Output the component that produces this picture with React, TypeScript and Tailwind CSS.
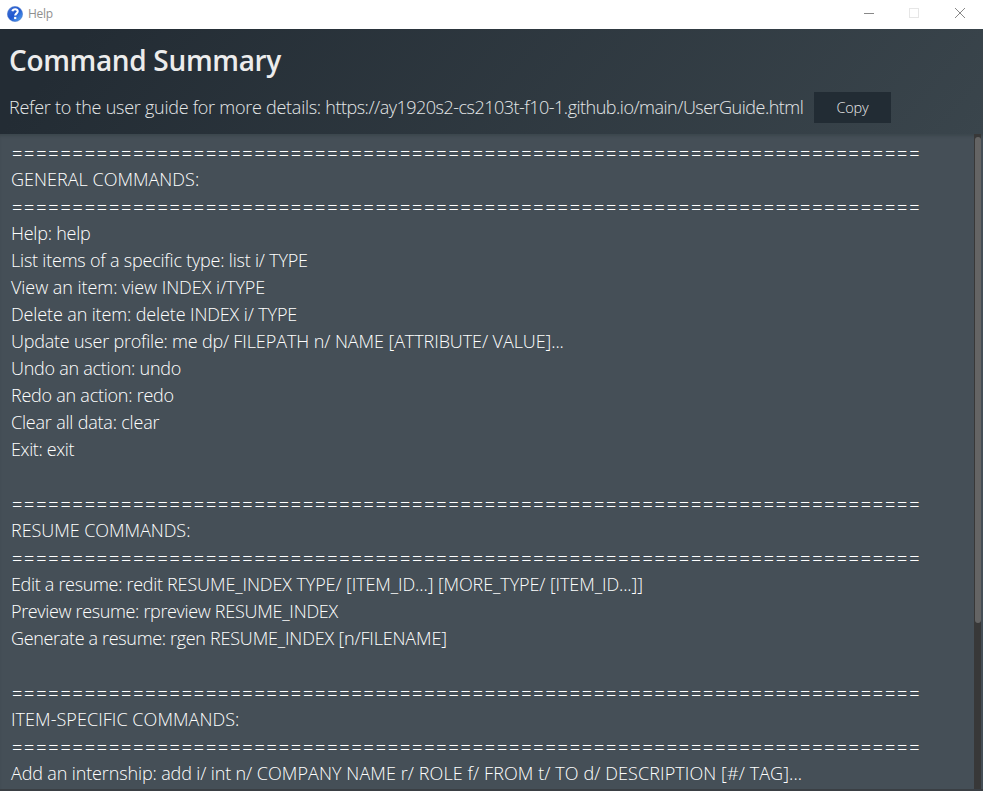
type Segment = { text: string; tracking: string };
type Line = Segment[];

const rule: Line = [
  { text: "=".repeat(75), tracking: "relative left-px top-px tracking-[1.85px]" },
];
const blank: Line = [{ text: "\u00a0", tracking: "" }];

const lines: Line[] = [
  rule,
  [{ text: "GENERAL COMMANDS:", tracking: "tracking-[0.02px]" }],
  rule,
  [{ text: "Help: help", tracking: "tracking-[-0.23px]" }],
  [{ text: "List items of a specific type: list i/ TYPE", tracking: "tracking-[-0.21px]" }],
  [{ text: "View an item: view INDEX i/TYPE", tracking: "tracking-[-0.05px]" }],
  [{ text: "Delete an item: delete INDEX i/ TYPE", tracking: "tracking-[-0.13px]" }],
  [
    { text: "Update user profile: me dp/ ", tracking: "tracking-[-0.22px]" },
    { text: "FILEPATH n/ NAME [ATTRIBUTE/ VALUE]...", tracking: "tracking-[-0.08px]" },
  ],
  [{ text: "Undo an action: undo", tracking: "tracking-[-0.26px]" }],
  [{ text: "Redo an action: redo", tracking: "tracking-[-0.25px]" }],
  [{ text: "Clear all data: clear", tracking: "tracking-[-0.2px]" }],
  [{ text: "Exit: exit", tracking: "tracking-[-0.38px]" }],
  blank,
  rule,
  [{ text: "RESUME COMMANDS:", tracking: "tracking-[-0.05px]" }],
  rule,
  [
    { text: "Edit a resume: redit ", tracking: "tracking-[-0.32px]" },
    {
      text: "RESUME_INDEX TYPE/ [ITEM_ID...] [MORE_TYPE/ [ITEM_ID...]]",
      tracking: "tracking-[-0.1px]",
    },
  ],
  [
    { text: "Preview resume: rpreview ", tracking: "tracking-[-0.35px]" },
    { text: "RESUME_INDEX", tracking: "tracking-[-0.24px]" },
  ],
  [
    { text: "Generate a resume: rgen ", tracking: "tracking-[-0.335px]" },
    { text: "RESUME_INDEX [n/FILENAME]", tracking: "tracking-[-0.17px]" },
  ],
  blank,
  rule,
  [{ text: "ITEM-SPECIFIC COMMANDS:", tracking: "tracking-[0.05px]" }],
  rule,
  [
    { text: "Add an internship: add i/ int n/ ", tracking: "tracking-[-0.135px]" },
    {
      text: "COMPANY NAME r/ ROLE f/ FROM t/ TO d/ DESCRIPTION [#/ TAG]...",
      tracking: "tracking-[0.09px]",
    },
  ],
];

function HelpIcon() {
  return (
    <svg width="16" height="16" viewBox="0 0 16 16">
      <defs>
        <linearGradient id="ball" x1="0" y1="0" x2="1" y2="1">
          <stop offset="0" stopColor="#4676d6" />
          <stop offset="0.5" stopColor="#1f56cf" />
          <stop offset="1" stopColor="#5fb0f5" />
        </linearGradient>
      </defs>
      <circle cx="8" cy="8" r="7.6" fill="url(#ball)" stroke="#3c6cc4" strokeWidth="0.5" />
      <path
        d="M5.4 5.2C6 2.7 10.9 2.6 10.7 5.5C10.6 7.4 8.2 7.3 8.2 9.6"
        fill="none"
        stroke="#fff"
        strokeWidth="2.1"
      />
      <rect x="7.1" y="10.9" width="2.2" height="2.2" fill="#fff" />
    </svg>
  );
}

function TitleBar() {
  return (
    <header className="flex h-[29px] shrink-0 items-start bg-white">
      <div className="flex h-[27px] items-center gap-[5px] pl-[7px]">
        <HelpIcon />
        <span className="text-[12px] leading-[27px] tracking-[-0.25px] text-[#8f8f8f]">Help</span>
      </div>
      <div className="ml-auto flex h-[27px] items-center pr-[17px]">
        <svg width="103" height="12" viewBox="0 0 103 12" fill="none" shapeRendering="crispEdges">
          <path d="M1 5.5H11" stroke="#888" />
          <rect x="46.5" y="0.5" width="9" height="9" stroke="#e6e6e6" />
          <path d="M92 0L102 10M102 0L92 10" stroke="#888" shapeRendering="auto" />
        </svg>
      </div>
    </header>
  );
}

export default function App() {
  return (
    <div className="flex h-[791px] w-[983px] flex-col overflow-hidden bg-[#3c474e] font-['Open_Sans','Noto_Sans',sans-serif]">
      <TitleBar />
      <section className="flex h-[105px] shrink-0 flex-col bg-[linear-gradient(130deg,#232c34_8%,#3a454c)] pl-[9px]">
        <h1 className="mt-2 h-[47px] whitespace-nowrap text-[28px] leading-[46px] font-semibold tracking-[-0.33px] text-[#ececec]">
          Command Summary
        </h1>
        <div className="mt-2 flex h-[31px] items-center">
          <p className="w-[805px] shrink-0 whitespace-nowrap text-[18px] leading-[31px] font-light tracking-[-0.26px] text-[#e4e7e8]">
            Refer to the user guide for more details:{" "}
            <span className="tracking-[-0.5px]">
              https://ay1920s2-cs2103t-f10-1.github.io/main/UserGuide.html
            </span>
          </p>
          <button className="h-[31px] w-[77px] bg-[#222c34] text-[14.5px] leading-[31px] font-light tracking-[-0.2px] text-[#e8e8e8]">
            Copy
          </button>
        </div>
      </section>
      <main className="flex h-[655px] shrink-0 bg-[#454f57] shadow-[inset_0_3px_3px_-1px_#3c464d]">
        <div className="w-[974px] shrink-0 overflow-hidden pt-[5px] pl-[11px] text-[18px] font-light text-white">
          {lines.map((line, i) => (
            <div key={i} className="h-[27px] whitespace-pre leading-[27px]">
              {line.map((segment, j) => (
                <span key={j} className={segment.tracking}>
                  {segment.text}
                </span>
              ))}
            </div>
          ))}
        </div>
        <div className="w-[7px] shrink-0 bg-[#383838] pt-[3px] pl-px">
          <div className="h-[486px] w-[6px] rounded-[3px] bg-[#646464]" />
        </div>
      </main>
      <div className="h-[2px] shrink-0 bg-[#3a3f44]" />
    </div>
  );
}
